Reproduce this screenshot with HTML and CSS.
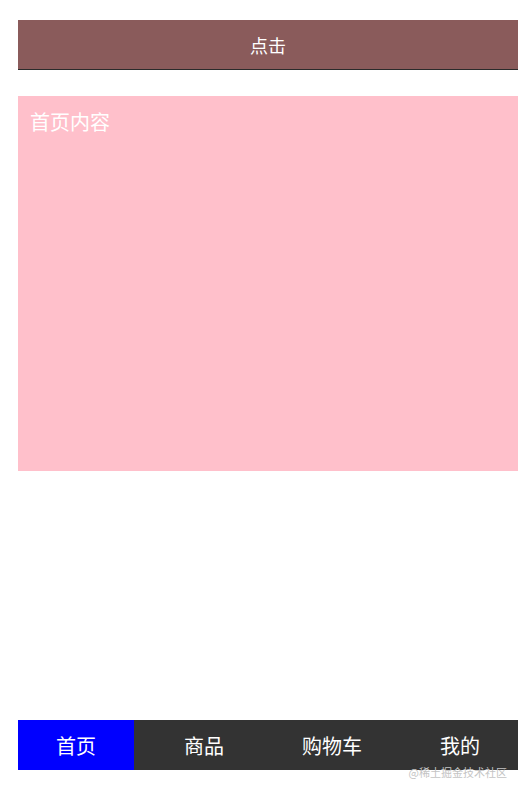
FILE: index.html
```html
<!DOCTYPE html>
<html lang="zh">
<head>
<meta charset="utf-8">
<title>Tabs</title>
<link rel="stylesheet" href="styles.css">
</head>
<body>
<div class="page">
  <div class="header">点击</div>
  <div class="content">首页内容</div>
  <nav class="tabbar">
    <div class="tab active">首页</div>
    <div class="tab">商品</div>
    <div class="tab">购物车</div>
    <div class="tab">我的</div>
  </nav>
  <div class="watermark">@稀土掘金技术社区</div>
</div>
</body>
</html>
```
FILE: styles.css
```css
html, body {
  margin: 0;
  padding: 0;
  background: #fff;
}
body {
  font-family: "Noto Sans CJK SC", "Noto Sans", sans-serif;
}
.page {
  position: relative;
  box-sizing: border-box;
  height: 795px;
  padding: 20px 6px 25px 18px;
  display: flex;
  flex-direction: column;
}
.header {
  height: 49px;
  border-bottom: 1px solid #2b2b2b;
  background: #8a5b5b;
  color: #fff;
  font-size: 18px;
  display: flex;
  align-items: center;
  justify-content: center;
}
.content {
  margin-top: 26px;
  height: 375px;
  box-sizing: border-box;
  padding: 11px 12px;
  background: #ffc0cb;
  color: #fff;
  font-size: 20px;
}
.tabbar {
  margin-top: auto;
  height: 50px;
  background: #333;
  display: flex;
  justify-content: space-between;
}
.tab {
  width: 116px;
  display: flex;
  align-items: center;
  justify-content: center;
  color: #fff;
  font-size: 20px;
}
.tab.active {
  background: #0000ff;
}
.watermark {
  position: absolute;
  right: 17px;
  bottom: 15px;
  font-size: 11px;
  color: #c4c4c4;
}
```
